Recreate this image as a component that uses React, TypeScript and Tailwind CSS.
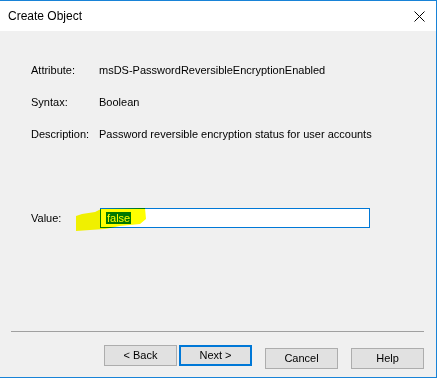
import React from "react";

const rows = [
  { label: "Attribute:", value: "msDS-PasswordReversibleEncryptionEnabled" },
  { label: "Syntax:", value: "Boolean" },
  { label: "Description:", value: "Password reversible encryption status for user accounts" },
];

function DialogButton({ children, primary }: { children: React.ReactNode; primary?: boolean }) {
  return (
    <button
      className={
        primary
          ? "h-[21px] w-[73px] border-2 border-[#0078d7] bg-[#e1e1e1] text-[11px] leading-none text-black"
          : "h-[21px] w-[73px] border border-[#adadad] bg-[#e1e1e1] text-[11px] leading-none text-black"
      }
    >
      {children}
    </button>
  );
}

export default function App() {
  return (
    <div className="relative flex h-[378px] w-[437px] flex-col border-y border-r border-[#1883d7] bg-[#f0f0f0] font-['Liberation_Sans',Arial,sans-serif] text-black">
      <div className="flex h-[30px] items-center justify-between bg-white pl-[8px] pr-[11px]">
        <span className="text-[12px]">Create Object</span>
        <svg width="11" height="11" viewBox="0 0 11 11" className="mr-[0px]">
          <path d="M0.5 0.5L10.5 10.5M10.5 0.5L0.5 10.5" stroke="#000" strokeWidth="1" />
        </svg>
      </div>

      <div className="flex flex-1 flex-col pl-[31px]">
        <div className="mt-[33px] flex flex-col gap-[19px]">
          {rows.map((r) => (
            <div key={r.label} className="flex h-[13px] items-center text-[11px]">
              <span className="w-[68px]">{r.label}</span>
              <span>{r.value}</span>
            </div>
          ))}
        </div>

        <div className="mt-[67px] flex h-[20px] items-center text-[11px]">
          <span className="w-[69px]">Value:</span>
          <div className="flex h-[20px] w-[270px] items-center border border-[#0078d7] bg-white pl-[5px]">
            <span className="bg-[#0078d7] px-[1px] leading-[12px] text-white">false</span>
          </div>
        </div>

        <div className="mr-[12px] ml-[-20px] mt-[103px] h-[1px] bg-[#a0a0a0]" />

        <div className="mt-[13px] flex justify-end pr-[12px]">
          <div className="flex gap-[2px]">
            <DialogButton>&lt; Back</DialogButton>
            <DialogButton primary>Next &gt;</DialogButton>
          </div>
          <div className="ml-[13px]">
            <DialogButton>Cancel</DialogButton>
          </div>
          <div className="ml-[13px]">
            <DialogButton>Help</DialogButton>
          </div>
        </div>
      </div>

      <svg
        className="pointer-events-none absolute left-0 top-0 mix-blend-multiply"
        width="437"
        height="378"
      >
        <polygon
          points="76,215 82,213 95,211 101,208 145,207 146,218 140,223 120,225 105,228 90,229 76,230"
          fill="#ffff00"
        />
      </svg>
    </div>
  );
}
